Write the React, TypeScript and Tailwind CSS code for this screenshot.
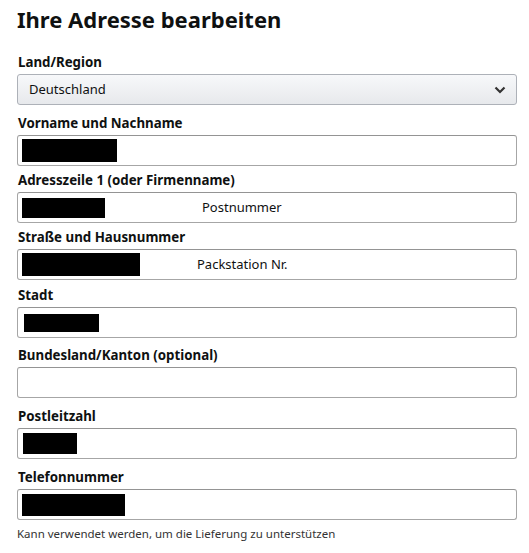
const font = { fontFamily: '"Noto Sans", "Open Sans", Arial, sans-serif' };

type Field = {
  label: string;
  mt: string;
  blockBox?: string;
  text?: string;
  textMl?: string;
};

const fields: Field[] = [
  { label: "Vorname und Nachname", mt: "mt-[9px]", blockBox: "ml-[4px] w-[95px] h-[23px]" },
  {
    label: "Adresszeile 1 (oder Firmenname)",
    mt: "mt-[5px]",
    blockBox: "ml-[4px] w-[83px] h-[20px]",
    text: "Postnummer",
    textMl: "ml-[97px]",
  },
  {
    label: "Straße und Hausnummer",
    mt: "mt-[5px]",
    blockBox: "ml-[4px] w-[118px] h-[23px]",
    text: "Packstation Nr.",
    textMl: "ml-[57px]",
  },
  { label: "Stadt", mt: "mt-[6px]", blockBox: "ml-[6px] w-[75px] h-[18px]" },
  { label: "Bundesland/Kanton (optional)", mt: "mt-[8px]" },
  { label: "Postleitzahl", mt: "mt-[9px]", blockBox: "ml-[5px] w-[54px] h-[21px]" },
  { label: "Telefonnummer", mt: "mt-[9px]", blockBox: "ml-[4px] w-[103px] h-[22px]" },
];

function Label({ children }: { children: string }) {
  return (
    <div className="pl-[1px] text-[13.3px] font-bold leading-[19px] text-[#0f1111]">{children}</div>
  );
}

function TextField({ field }: { field: Field }) {
  return (
    <div className={field.mt}>
      <Label>{field.label}</Label>
      <div className="mt-[2px] flex h-[31px] items-center rounded-[3px] border border-[#a6a6a6] border-t-[#949494] bg-white">
        {field.blockBox && <span className={`block bg-black ${field.blockBox}`} />}
        {field.text && (
          <span className={`text-[13px] text-[#0f1111] ${field.textMl}`}>{field.text}</span>
        )}
      </div>
    </div>
  );
}

export default function App() {
  return (
    <div className="min-h-[553px] w-[529px] bg-white px-[17px]" style={font}>
      <h1 className="pt-[4px] text-[22px] font-bold leading-[30px] text-[#0f1111]">
        Ihre Adresse bearbeiten
      </h1>

      <div className="mt-[19px]">
        <Label>Land/Region</Label>
        <div className="mt-[2px] flex h-[31px] w-[500px] items-center justify-between rounded-[3px] border border-[#adb1b8] bg-gradient-to-b from-[#f7f8fa] to-[#e7e9ec] pl-[11px] pr-[9px]">
          <span className="text-[13px] text-[#0f1111]">Deutschland</span>
          <svg width="12" height="8" viewBox="0 0 12 8" className="mr-[1px]">
            <polyline points="1.5,1.5 6,6 10.5,1.5" fill="none" stroke="#333" strokeWidth="2.2" />
          </svg>
        </div>
      </div>

      <div className="w-[500px]">
        {fields.map((f) => (
          <TextField key={f.label} field={f} />
        ))}
      </div>

      <p className="mt-[6px] text-[11.5px] leading-[16px] text-[#333]">
        Kann verwendet werden, um die Lieferung zu unterstützen
      </p>
    </div>
  );
}
